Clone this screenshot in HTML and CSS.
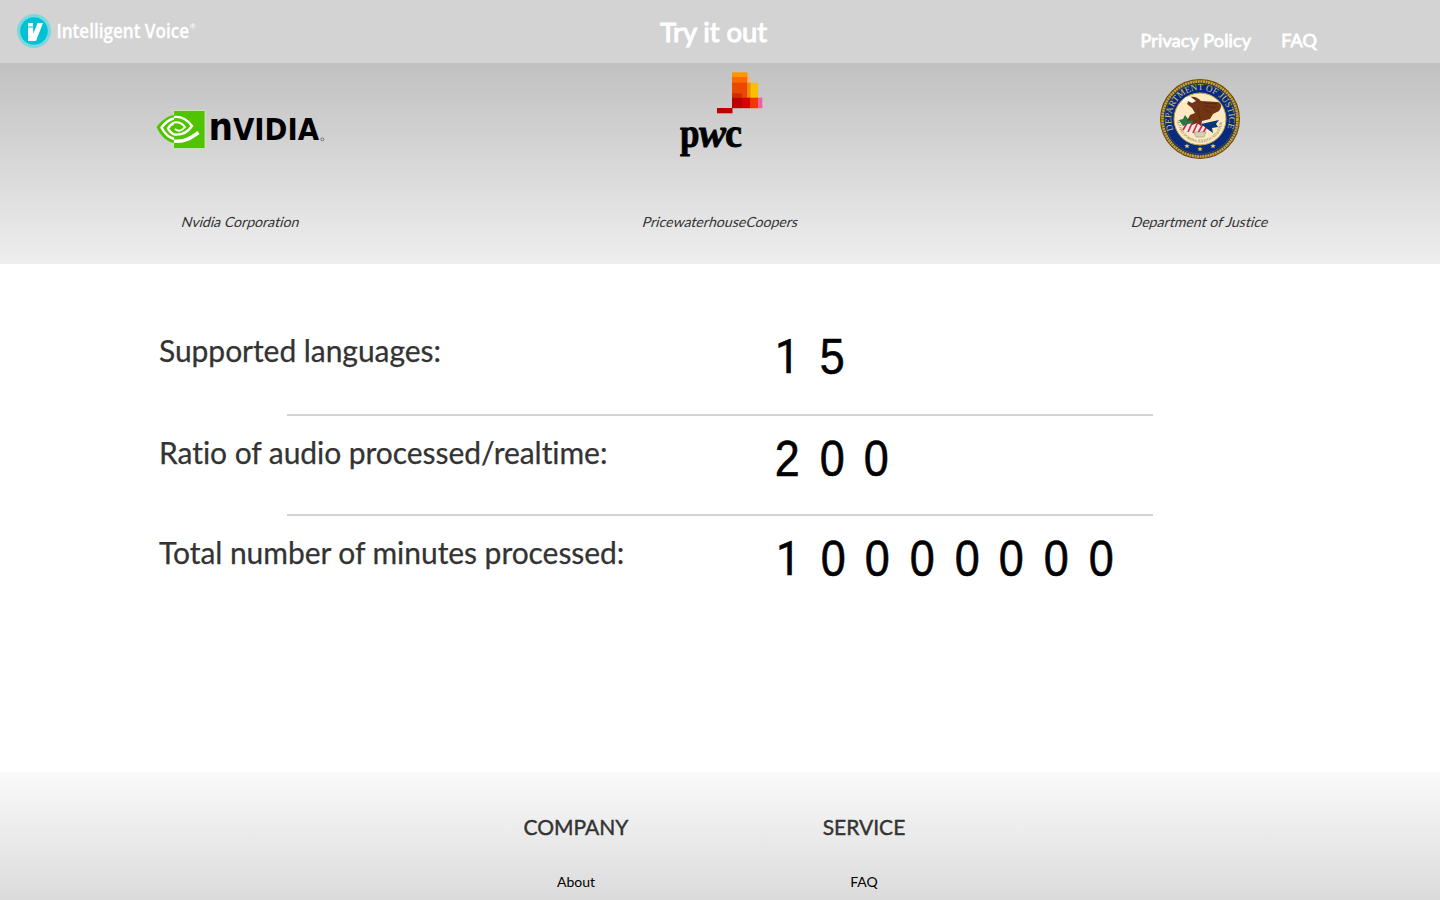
FILE: index.html
```html
<!DOCTYPE html>
<html lang="en">
<head>
<meta charset="utf-8">
<title>Intelligent Voice</title>
<link rel="stylesheet" href="styles.css">
</head>
<body>
<header class="header">
  <a class="brand" href="#">
    <svg width="210" height="63" viewBox="0 0 210 63">
      <circle cx="34" cy="31" r="17" fill="#7dd7df"/>
      <circle cx="34" cy="31" r="13.800" fill="#00c2d4"/>
      <path d="M28 23h5v3.500h-5zM28 27.500h5l.5 6 4-10.500h5.500l-7 18h-8z" fill="#fff"/>
      <text class="brand-name" x="56.500" y="38" textLength="132.500" lengthAdjust="spacingAndGlyphs">Intelligent Voice</text>
      <text class="brand-mark" x="189.700" y="28.500">®</text>
    </svg>
  </a>
  <a class="try" href="#"><svg width="112" height="40" viewBox="0 0 112 40"><text class="try-text" x="2" y="29" textLength="107">Try it out</text></svg></a>
  <nav class="nav"><a href="#">Privacy Policy</a><a href="#">FAQ</a></nav>
</header>
<section class="clients">
  <figure class="client">
    <svg class="logo" width="180" height="110" viewBox="150 63 180 110">
      <path d="M173.500 110.500h31.500v38h-31.500z" fill="#52c300" stroke="#dff2cf" stroke-width=".7"/>
      <path d="M174 115c-7 1-13 6-17.500 12 4 9 10 15 17.500 16z" fill="#52c300"/>
      <g fill="none" stroke="#fff" stroke-width="2.400">
        <path d="M174 118.500c-5 1-9 4.500-12.500 9 3 6 7.500 10 12.500 11.500"/>
        <path d="M174 123c-3 1-4.500 3-6 5.500 1.500 3 3.500 5 6 6"/>
        <path d="M174 117c9-1 14 3.500 18 9-5 7-10 9.500-18 8.500"/>
        <path d="M174 122.500c6-1 9 2 11 4.500-4 5-7 4.500-10 2" stroke-width="2"/>
        <path d="M174 141c10 1.500 17-3 24.500-8.500" stroke-width="3.500"/>
      </g>
      <text class="nvidia" x="208.500" y="140" font-size="39" textLength="24.500" lengthAdjust="spacingAndGlyphs">n</text>
      <text class="nvidia" x="233" y="140" font-size="30" textLength="86" lengthAdjust="spacingAndGlyphs">VIDIA</text>
      <circle cx="322.300" cy="139.300" r="1.500" fill="none" stroke="#555" stroke-width=".7"/>
    </svg>
    <figcaption>Nvidia Corporation</figcaption>
  </figure>
  <figure class="client">
    <svg class="logo" width="100" height="110" viewBox="670 63 100 110">
      <path d="M732 72.300h15.600V78H732z" fill="#ff9600"/>
      <path d="M732 77h15.600v6H732z" fill="#fa6800"/>
      <path d="M747.500 77h3v6h-3z" fill="#fab27a"/>
      <path d="M732 82.700h15.600V98H732z" fill="#ea4700"/>
      <path d="M750 82.700h8V98h-8z" fill="#fac000"/>
      <path d="M747.500 82.700h3V98h-3z" fill="#f48a00"/>
      <path d="M732 93.300h10V98h-10z" fill="#cf2f00"/>
      <path d="M732 97.700h10v10.500h-10z" fill="#be0000"/>
      <path d="M742 97.700h8.300v10.500H742z" fill="#d80000"/>
      <path d="M750 97.700h8.300v10.500H750z" fill="#ef3700"/>
      <path d="M758.300 97.700h4v10.500h-4z" fill="#f759a4"/>
      <path d="M717 108h15.500v5.300H717z" fill="#be0000"/>
      <g transform="translate(0 146.500) scale(1 1.200)">
        <text class="pwc" x="680" y="0" textLength="19.500" lengthAdjust="spacingAndGlyphs">p</text>
        <text class="pwc pwc-w" x="699" y="0" textLength="27" lengthAdjust="spacingAndGlyphs">w</text>
        <text class="pwc" x="725" y="0" textLength="17" lengthAdjust="spacingAndGlyphs">c</text>
      </g>
    </svg>
    <figcaption>PricewaterhouseCoopers</figcaption>
  </figure>
  <figure class="client">
    <svg class="logo" width="90" height="110" viewBox="1155 63 90 110">
      <defs>
        <path id="ring" d="M1173.400 130a28.800 28.800 0 1 1 53.200 0"/>
        <path id="motto" d="M1177.500 120a22.500 22.500 0 0 0 45 0"/>
      </defs>
      <circle cx="1200" cy="119" r="39" fill="#173a78" stroke="#6f4b0b" stroke-width="2"/>
      <circle cx="1200" cy="119" r="37.500" fill="none" stroke="#cfa22e" stroke-width="2.600" stroke-dasharray="2 .6"/>
      <circle cx="1200" cy="119" r="35" fill="#062b80" stroke="#54471e"/>
      <circle cx="1200" cy="119" r="26" fill="#ffebbf" stroke="#c3a34b"/>
      <text class="seal-text"><textPath href="#ring" textLength="111" lengthAdjust="spacingAndGlyphs">DEPARTMENT OF JUSTICE</textPath></text>
      <text class="motto"><textPath href="#motto" textLength="68" lengthAdjust="spacingAndGlyphs">QUI PRO DOMINA JUSTITIA SEQUITUR</textPath></text>
      <path d="M1182 124l8-8 14 5 6 10-12 4-13-4z" fill="#f8e9e6"/>
      <path d="M1183 130l7-12M1188 132l6-13M1193 133l5-11M1198 133l5-9M1203 133l4-7" stroke="#d22645" stroke-width="1.700"/>
      <path d="M1201 124l18-4-3 4 2 3-6 1 1 5-7-5z" fill="#08347c"/>
      <path d="M1179 120l4-1 2-4 3 4 4-3 1 4 4 1-4 2-5 1-5 2z" fill="#257642"/>
      <path d="M1190 97c5-1 8 1 11 4l17 1c4 2 4 5 1 9l-6 3-3 5-8 2-1 5-4-3-5 2 1-5-6 1 3-6 5-2-3-5-5-4z" fill="#713515"/>
      <path d="M1203 103l14 1M1204 106l12 2M1203 109l8 4M1198 108l2 12" stroke="#5b2910" stroke-width="1" fill="none"/>
      <path d="M1191 97c-5-1-8 1-8 5l5-1 4 2 4-2z" fill="#fffbea"/>
      <path d="M1194 132h12l-2 5h-8z" fill="#d5d1b2" stroke="#969680" stroke-width=".6"/>
      <g fill="#f2cf54"><path id="star" d="M1200 146.500l.7 1.700 2 .1-1.500 1.200.5 1.800-1.700-1-1.700 1 .5-1.800-1.500-1.200 2-.1z"/><use href="#star" x="-13" y="-3"/><use href="#star" x="13" y="-3"/></g>
    </svg>
    <figcaption>Department of Justice</figcaption>
  </figure>
</section>
<main class="stats">
  <div class="stat"><h2>Supported languages:</h2><div class="digits"><span class="one">1</span><span>5</span></div></div>
  <hr>
  <div class="stat"><h2>Ratio of audio processed/realtime:</h2><div class="digits"><span>2</span><span>0</span><span>0</span></div></div>
  <hr>
  <div class="stat"><h2>Total number of minutes processed:</h2><div class="digits total"><span class="one">1</span><span>0</span><span>0</span><span>0</span><span>0</span><span>0</span><span>0</span><span>0</span></div></div>
</main>
<footer class="footer">
  <div class="links"><h3>COMPANY</h3><a href="#">About</a></div>
  <div class="links"><h3>SERVICE</h3><a href="#">FAQ</a></div>
</footer>
</body>
</html>
```

FILE: styles.css
```css
* { box-sizing: border-box; }
body { margin: 0; height: 900px; overflow: hidden; background: #fff; color: #333; font-family: Lato, sans-serif; font-variant-ligatures: none; }
a { color: inherit; text-decoration: none; }
h2, h3, figure { margin: 0; font-weight: 400; }
svg { display: block; }
.header { height: 63px; background: #d3d3d3; color: #fff; display: grid; grid-template-columns: 658px 482px 300px; }
.brand-name { font: 600 20px "Open Sans", sans-serif; fill: #fff; stroke: #fff; stroke-width: .3px; }
.brand-mark { font: 7.5px Lato, sans-serif; fill: #fff; }
.try { padding-top: 13px; }
.try-text { font: 400 27.5px Lato, sans-serif; fill: #fff; stroke: #fff; stroke-width: 1.1px; }
.nav { display: flex; gap: 30px; padding: 29px 0 0 .5px; font-size: 18px; line-height: 22px; -webkit-text-stroke: .8px #fff; letter-spacing: .15px; }
.clients { height: 201px; background: linear-gradient(#c1c1c1, #eee); display: grid; grid-template-columns: repeat(3, 1fr); }
.client { display: flex; flex-direction: column; align-items: center; }
.client figcaption { margin-top: 40px; padding-left: 1px; font-size: 14px; line-height: 18px; letter-spacing: .05px; transform: skewX(-16deg); }
.nvidia { font-family: "DejaVu Sans", sans-serif; font-weight: 700; fill: #000; }
.pwc { font: 700 33px "Liberation Serif", serif; fill: #000; stroke: #000; stroke-width: .7px; }
.pwc-w { font-style: italic; }
.seal-text { font: 9px "Liberation Serif", serif; fill: #d8c675; }
.motto { font: 4px "Liberation Serif", serif; fill: #68665b; }
.stats { height: 508px; padding-top: 66px; }
.stat { height: 84px; display: grid; grid-template-columns: 606px 1fr; padding-left: 159px; }
.stat h2 { font-size: 30px; line-height: 40px; letter-spacing: -.05px; -webkit-text-stroke: .25px #333; }
.stats hr { width: 866px; height: 2px; border: 0; background: #d3d3d3; margin: 0 auto; }
.stats hr + .stat { height: 98px; padding-top: 16px; }
.digits { display: flex; color: #000; font: 50.5px/53px "Liberation Sans", sans-serif; -webkit-text-stroke: .6px #000; }
.digits span { width: 44.7px; text-align: center; transform: scaleX(.89); }
.digits .one { font-family: Roboto, sans-serif; font-size: 49px; }
.total { padding-left: 1px; }
.footer { height: 128px; padding: 42px 0 0 426px; display: grid; grid-template-columns: 300px 276px; background: linear-gradient(#fafafa, #dbdbdb); }
.links { text-align: center; }
.links h3 { font-size: 21px; line-height: 26px; margin-bottom: 33px; -webkit-text-stroke: .4px #333; }
.links a { display: block; color: #000; font-size: 14px; line-height: 18px; }
```
